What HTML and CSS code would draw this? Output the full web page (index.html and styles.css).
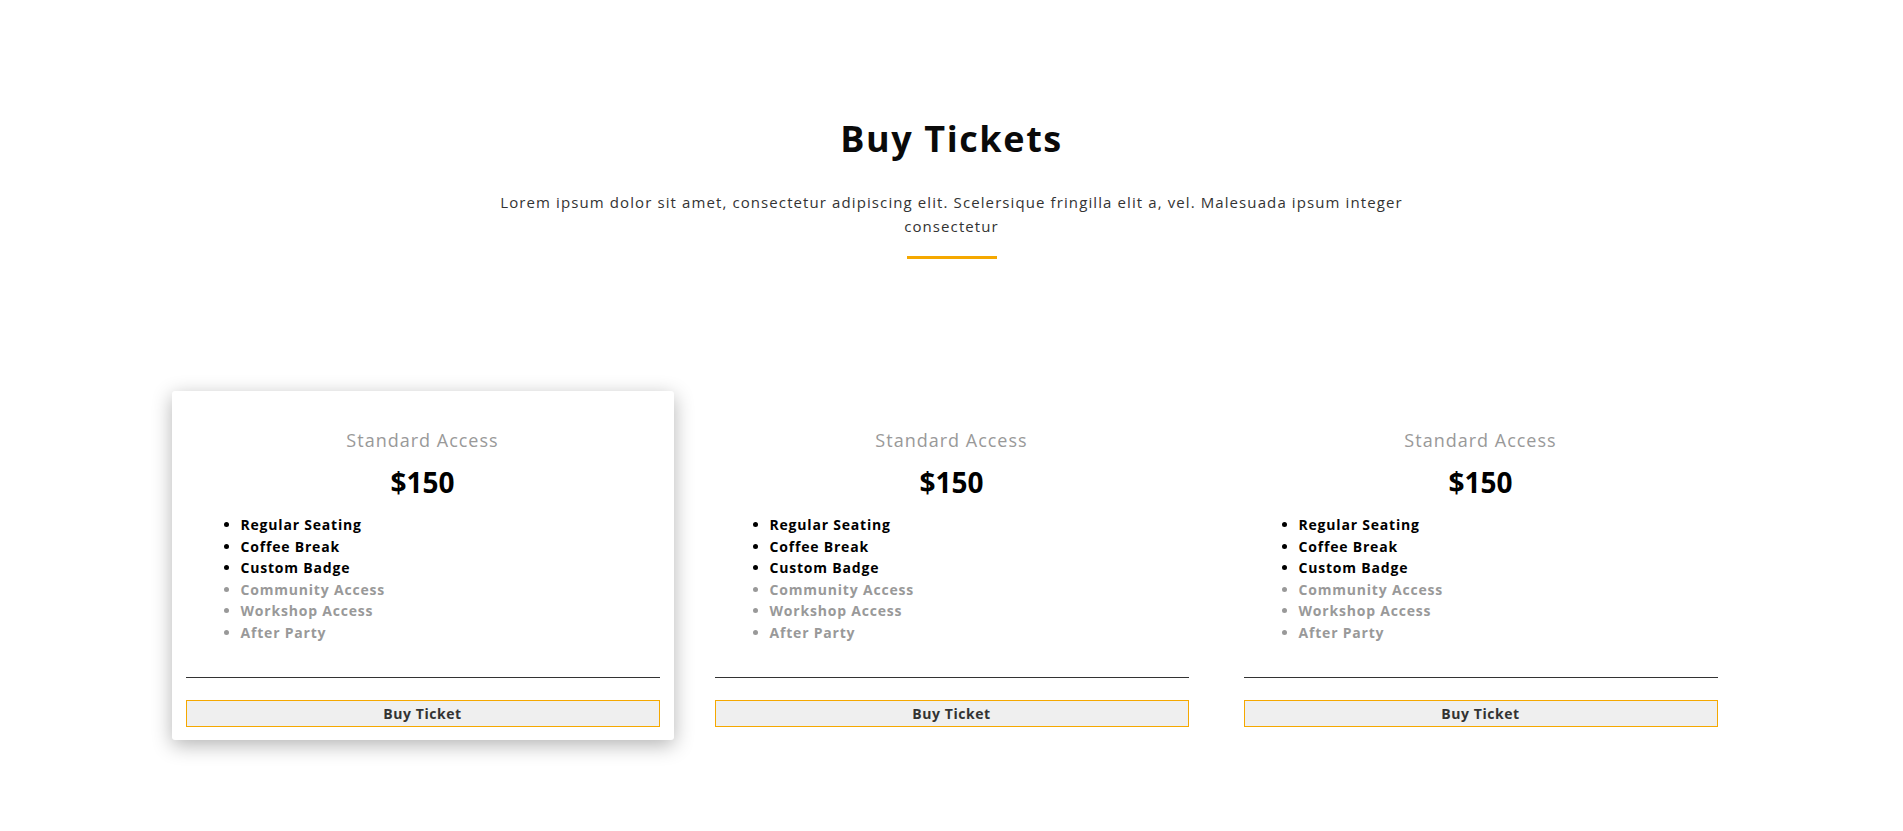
FILE: index.html
```html
<!DOCTYPE html>
<html lang="en">
<head>
<meta charset="utf-8">
<title>Buy Tickets</title>
<link rel="stylesheet" href="styles.css">
</head>
<body>
<section class="tickets">
  <header class="tickets-head">
    <h2 class="tickets-title">Buy Tickets</h2>
    <p class="tickets-lead">Lorem ipsum dolor sit amet, consectetur adipiscing elit. Scelersique fringilla elit a, vel. Malesuada ipsum integer consectetur</p>
    <div class="tickets-bar"></div>
  </header>
  <div class="tickets-grid">
    <article class="card card-active">
      <h3 class="card-name">Standard Access</h3>
      <div class="card-price">$150</div>
      <ul class="card-list">
        <li class="on">Regular Seating</li>
        <li class="on">Coffee Break</li>
        <li class="on">Custom Badge</li>
        <li class="off">Community Access</li>
        <li class="off">Workshop Access</li>
        <li class="off">After Party</li>
      </ul>
      <hr class="card-rule">
      <button class="card-btn" type="button">Buy Ticket</button>
    </article>
    <article class="card">
      <h3 class="card-name">Standard Access</h3>
      <div class="card-price">$150</div>
      <ul class="card-list">
        <li class="on">Regular Seating</li>
        <li class="on">Coffee Break</li>
        <li class="on">Custom Badge</li>
        <li class="off">Community Access</li>
        <li class="off">Workshop Access</li>
        <li class="off">After Party</li>
      </ul>
      <hr class="card-rule">
      <button class="card-btn" type="button">Buy Ticket</button>
    </article>
    <article class="card">
      <h3 class="card-name">Standard Access</h3>
      <div class="card-price">$150</div>
      <ul class="card-list">
        <li class="on">Regular Seating</li>
        <li class="on">Coffee Break</li>
        <li class="on">Custom Badge</li>
        <li class="off">Community Access</li>
        <li class="off">Workshop Access</li>
        <li class="off">After Party</li>
      </ul>
      <hr class="card-rule">
      <button class="card-btn" type="button">Buy Ticket</button>
    </article>
  </div>
</section>
</body>
</html>
```
FILE: styles.css
```css
* { box-sizing: border-box; }
html, body { margin: 0; padding: 0; background: #fff; }
body {
  font-family: "Open Sans", "Liberation Sans", sans-serif;
  color: #333;
}
.tickets {
  padding-top: 117px;
  padding-bottom: 60px;
}
.tickets-head {
  display: flex;
  flex-direction: column;
  align-items: center;
  text-align: center;
}
.tickets-title {
  margin: 0;
  font-size: 36px;
  line-height: 44px;
  font-weight: 700;
  letter-spacing: 1.6px;
  color: #0a0a0a;
}
.tickets-lead {
  margin: 29px 0 0;
  max-width: 950px;
  font-size: 15px;
  line-height: 24px;
  letter-spacing: 1.1px;
  color: #333;
}
.tickets-bar {
  width: 90px;
  height: 3px;
  margin-top: 18px;
  background: #f5a800;
}
.tickets-grid {
  width: 1560px;
  margin: 132px auto 0;
  display: grid;
  grid-template-columns: repeat(3, 502px);
  column-gap: 27px;
}
.card {
  background: #fff;
  border-radius: 3px;
  padding: 36px 14px 13px;
  display: flex;
  flex-direction: column;
}
.card-active {
  box-shadow: 0 5px 20px rgba(0, 0, 0, 0.3);
}
.card-name {
  margin: 0;
  text-align: center;
  font-size: 18px;
  line-height: 26px;
  font-weight: 500;
  letter-spacing: 1px;
  color: #999;
}
.card-price {
  margin-top: 11px;
  text-align: center;
  font-size: 28px;
  line-height: 36px;
  font-weight: 700;
  color: #000;
}
.card-list {
  margin: 14px 0 0;
  padding-left: 55px;
  font-size: 14px;
  line-height: 21.6px;
  font-weight: 700;
  letter-spacing: 0.8px;
}
.card-list .on { color: #000; }
.card-list .off { color: #999; }
.card-rule {
  margin: 33px 0 0;
  border: 0;
  border-top: 1px solid #333;
  height: 0;
}
.card-btn {
  margin-top: 22px;
  height: 27px;
  width: 100%;
  border: 1px solid #f5a800;
  background: #efefef;
  font-family: inherit;
  font-size: 14px;
  font-weight: 700;
  letter-spacing: 0.55px;
  color: #333;
  padding: 0;
}
```
